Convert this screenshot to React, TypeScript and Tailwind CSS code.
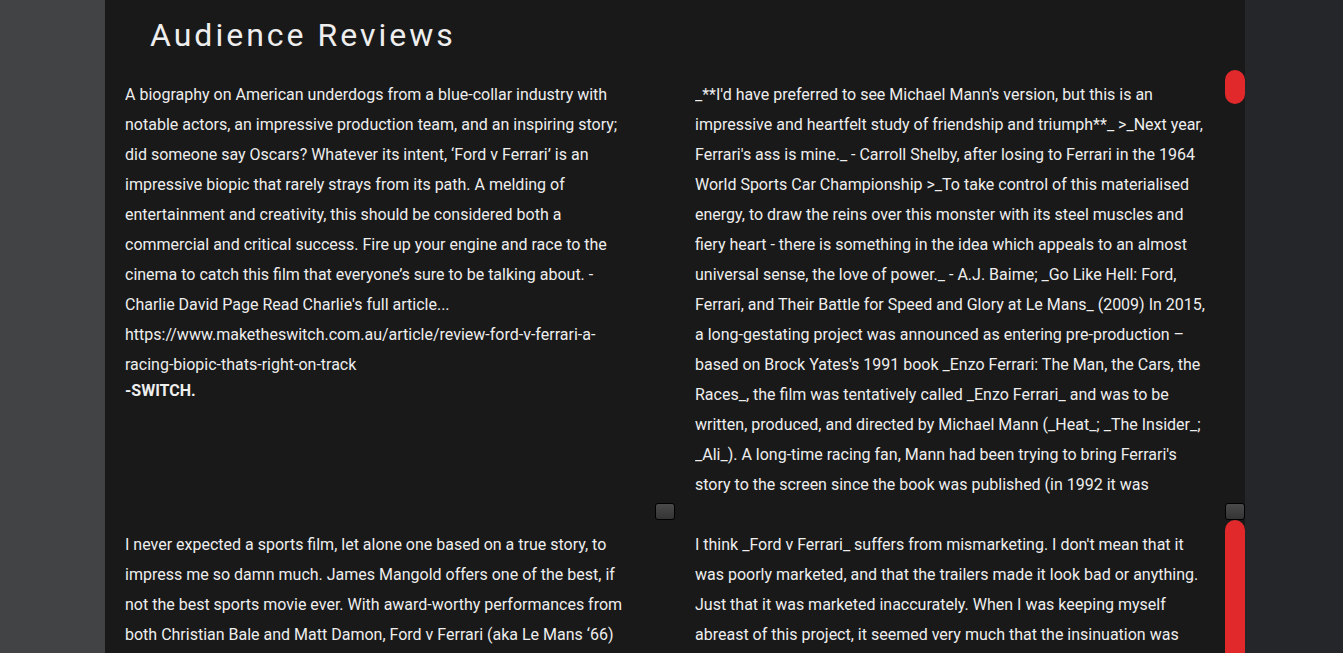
import React from "react";

const Thumb = ({ className }: { className: string }) => (
  <div className={"w-5 rounded-full bg-[#e1292c] " + className} />
);

const Btn = () => (
  <div className="h-[17px] w-5 rounded-[3px] border border-black bg-gradient-to-b from-[#4a4a4a] to-[#343434]" />
);

function Card({
  children,
  bar,
  textW,
}: {
  children: React.ReactNode;
  bar: React.ReactNode;
  textW: string;
}) {
  return (
    <div className="flex h-[450px]">
      <div className="flex-1 pl-5 pt-2.5">
        <div
          className={
            "h-[420px] overflow-hidden text-[16px] leading-[30px] text-[#eeeeee] " +
            textW
          }
        >
          {children}
        </div>
      </div>
      <div className="flex w-5 flex-col">{bar}</div>
    </div>
  );
}

export default function App() {
  return (
    <div
      className="flex h-[653px] w-full overflow-hidden"
      style={{ fontFamily: "Roboto, 'Noto Sans', sans-serif" }}
    >
      <div className="w-[105px] shrink-0 bg-[#424345]" />
      <main className="w-[1140px] shrink-0 bg-[#191919]">
        <h2 className="flex h-[70px] items-center pl-[45px] text-[32px] font-normal tracking-[3px] text-[#eeeeee]">
          Audience Reviews
        </h2>
        <div className="grid grid-cols-2">
          <Card
            textW="w-[500px]"
            bar={
              <>
                <div className="flex-1" />
                <Btn />
              </>
            }
          >
            <p>
              A biography on American underdogs from a blue-collar industry with
              notable actors, an impressive production team, and an inspiring
              story; did someone say Oscars? Whatever its intent, ‘Ford v
              Ferrari’ is an impressive biopic that rarely strays from its path.
              A melding of entertainment and creativity, this should be
              considered both a commercial and critical success. Fire up your
              engine and race to the cinema to catch this film that everyone’s
              sure to be talking about. - Charlie David Page Read Charlie's full
              article...
              https://www.maketheswitch.com.au/article/review-ford-v-ferrari-a-racing-biopic-thats-right-on-track
            </p>
            <p className="font-bold leading-[22px]">-SWITCH.</p>
          </Card>
          <Card
            textW="w-[511px]"
            bar={
              <>
                <Thumb className="h-[34px]" />
                <div className="flex-1" />
                <Btn />
              </>
            }
          >
            <p>
              _**I'd have preferred to see Michael Mann's version, but this is
              an impressive and heartfelt study of friendship and triumph**_
              &gt;_Next year, Ferrari's ass is mine._ - Carroll Shelby, after
              losing to Ferrari in the 1964 World Sports Car Championship
              &gt;_To take control of this materialised energy, to draw the reins
              over this monster with its steel muscles and fiery heart - there is
              something in the idea which appeals to an almost universal sense,
              the love of power._ - A.J. Baime; _Go Like Hell: Ford, Ferrari, and
              Their Battle for Speed and Glory at Le Mans_ (2009) In 2015, a
              long-gestating project was announced as entering pre-production –
              based on Brock Yates's 1991 book _Enzo Ferrari: The Man, the Cars,
              the Races_, the film was tentatively called _Enzo Ferrari_ and was
              to be written, produced, and directed by Michael Mann (_Heat_; _The
              Insider_; _Ali_). A long-time racing fan, Mann had been trying to
              bring Ferrari's story to the screen since the book was published
              (in 1992 it was
            </p>
          </Card>
          <Card textW="w-[500px]" bar={<div className="flex-1" />}>
            <p>
              I never expected a sports film, let alone one based on a true
              story, to impress me so damn much. James Mangold offers one of the
              best, if not the best sports movie ever. With award-worthy
              performances from both Christian Bale and Matt Damon, Ford v
              Ferrari (aka Le Mans ‘66)
            </p>
          </Card>
          <Card textW="w-[511px]" bar={<Thumb className="h-[300px]" />}>
            <p>
              I think _Ford v Ferrari_ suffers from mismarketing. I don't mean
              that it was poorly marketed, and that the trailers made it look bad
              or anything. Just that it was marketed inaccurately. When I was
              keeping myself abreast of this project, it seemed very much that
              the insinuation was
            </p>
          </Card>
        </div>
      </main>
      <div className="flex-1 bg-[#25262a]" />
    </div>
  );
}
